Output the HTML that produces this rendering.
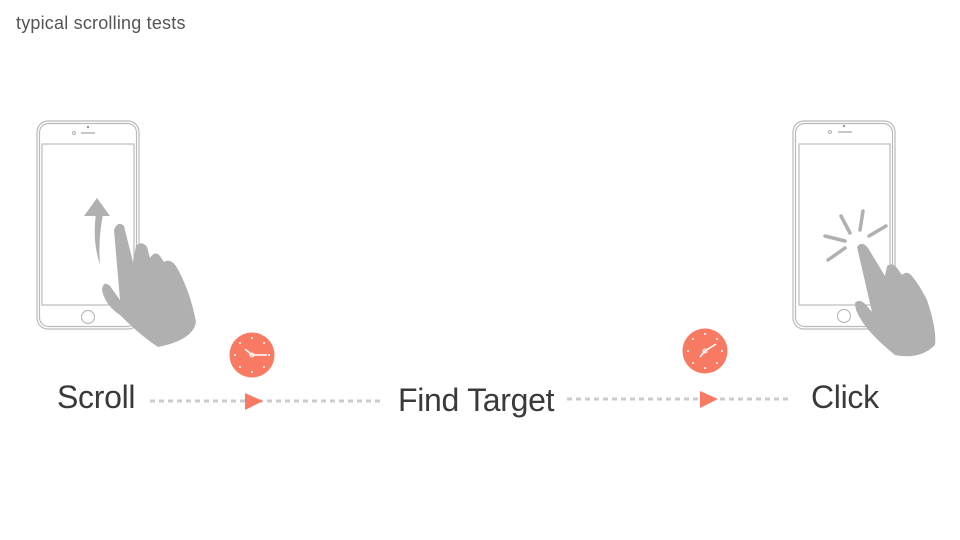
<!DOCTYPE html>
<html><head><style>
body{margin:0;width:960px;height:540px;background:#fff;overflow:hidden;position:relative;font-family:"Liberation Sans",sans-serif;}
.t{position:absolute;color:#3a3a3a;font-weight:normal;white-space:nowrap;letter-spacing:-0.3px}
</style></head><body>
<div class="t" style="left:16px;top:13px;font-size:18px;color:#555;letter-spacing:0.2px">typical scrolling tests</div>
<div class="t" style="left:57px;top:379px;font-size:32px">Scroll</div>
<div class="t" style="left:398px;top:382px;font-size:32px">Find Target</div>
<div class="t" style="left:811px;top:379px;font-size:32px">Click</div>
<svg width="960" height="540" style="position:absolute;left:0;top:0">
<g fill="none" stroke="#bbb" stroke-width="1.2">
<rect x="37" y="121" width="102" height="208" rx="11"/>
<rect x="39.5" y="123.5" width="97" height="203" rx="9"/>
<rect x="42" y="144" width="92" height="161"/>
<circle cx="88" cy="317" r="6.5"/>
<circle cx="74" cy="133" r="1.5"/>
<line x1="81" y1="133" x2="95" y2="133" stroke-width="1.6"/>
<rect x="793" y="121" width="102" height="208" rx="11"/>
<rect x="795.5" y="123.5" width="97" height="203" rx="9"/>
<rect x="799" y="144" width="91" height="161"/>
<circle cx="844" cy="316" r="6.5"/>
<circle cx="830" cy="132" r="1.5"/>
<line x1="838" y1="132" x2="852" y2="132" stroke-width="1.6"/>
</g>
<circle cx="88" cy="127" r="1.2" fill="#999"/>
<circle cx="844" cy="126" r="1.2" fill="#999"/>
<path d="M100 265 Q92 240 96 214 L103 214 Q98 240 100 265Z" fill="#b0b0b0"/>
<path d="M84 216 L97 198 L110 216Z" fill="#b0b0b0"/>
<path d="M114 230 Q118 220 124 226 L133 262 L136 246 Q142 240 147 247 L150 258 Q155 250 160 256 L164 262 Q170 258 176 266 Q190 290 196 322 Q193 340 158 347 Q140 335 120 315 Q105 305 102 290 Q103 280 110 286 L120 300 Z" fill="#b0b0b0"/>
<g stroke="#b0b0b0" stroke-width="3.5" stroke-linecap="round">
<line x1="841" y1="216" x2="850" y2="233"/>
<line x1="863" y1="211" x2="860" y2="230"/>
<line x1="886" y1="226" x2="869" y2="236"/>
<line x1="825" y1="236" x2="845" y2="241"/>
<line x1="828" y1="260" x2="845" y2="248"/>
</g>
<path d="M857 247 Q862 240 868 248 L885 276 L887 266 Q893 262 897 268 L902 275 Q907 270 912 276 Q920 286 927 300 Q937 330 935 345 Q920 360 895 355 Q870 335 860 318 Q855 310 855 303 Q860 298 866 305 L872 312 Z" fill="#b0b0b0"/>
<g stroke="#ccc" stroke-width="3" stroke-dasharray="5 4">
<line x1="150" y1="401" x2="384" y2="401"/>
<line x1="567" y1="399" x2="790" y2="399"/>
</g>
<path d="M245 393 L263 401 L245 410 Z" fill="#f97a63"/>
<path d="M700 391 L718 399 L700 408 Z" fill="#f97a63"/>
<g>
<circle cx="252" cy="355" r="22.5" fill="#f97a63"/>
<g fill="#fff"><circle cx="252" cy="338" r="1"/><circle cx="252" cy="372" r="1"/><circle cx="235" cy="355" r="1"/><circle cx="269" cy="355" r="1"/><circle cx="240" cy="343" r="1"/><circle cx="264" cy="343" r="1"/><circle cx="240" cy="367" r="1"/><circle cx="264" cy="367" r="1"/></g>
<path d="M245 349 L252 355 L267 355" stroke="#fff" stroke-width="1.5" fill="none"/>
<circle cx="252" cy="355" r="2" fill="none" stroke="#fff"/>
</g>
<g>
<circle cx="705" cy="351" r="22.5" fill="#f97a63"/>
<g fill="#fff"><circle cx="705" cy="334" r="1"/><circle cx="705" cy="368" r="1"/><circle cx="688" cy="351" r="1"/><circle cx="722" cy="351" r="1"/><circle cx="693" cy="339" r="1"/><circle cx="717" cy="339" r="1"/><circle cx="693" cy="363" r="1"/><circle cx="717" cy="363" r="1"/></g>
<path d="M700 357 L705 351 L716 344" stroke="#fff" stroke-width="1.5" fill="none"/>
<circle cx="705" cy="351" r="2" fill="none" stroke="#fff"/>
</g>
</svg>
</body></html>
